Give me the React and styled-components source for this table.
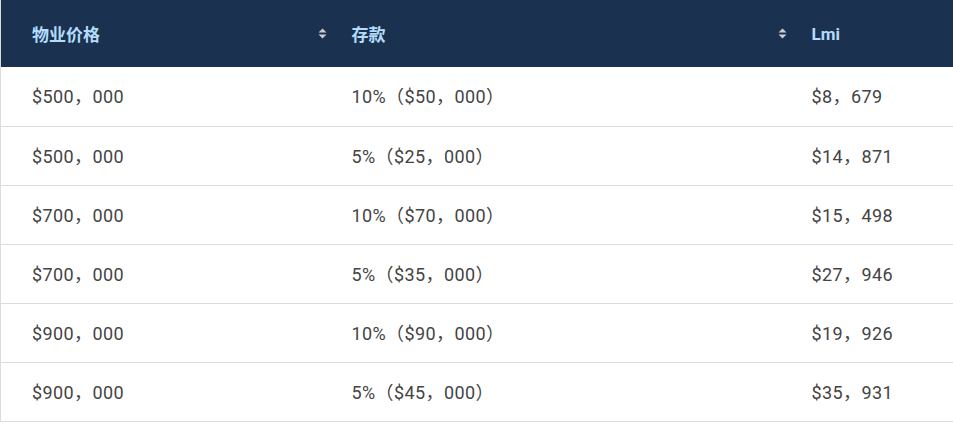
import React from "react";
import styled, { createGlobalStyle } from "styled-components";

const GlobalStyle = createGlobalStyle`
  body {
    margin: 0;
    background: #fff;
    font-family: Roboto, "Noto Sans CJK SC", sans-serif;
  }
`;

const Table = styled.table`
  border-collapse: collapse;
  width: 960px;
  table-layout: fixed;
  border-left: 1px solid #dcdcdc;
`;

const HeadCell = styled.th`
  background: #1b3150;
  color: #b3dcfb;
  font-weight: 700;
  font-size: 17px;
  text-align: left;
  height: 67px;
  padding: 0 12px;
  padding-left: ${(p) => (p.$first ? "31px" : "12px")};
  box-sizing: border-box;
  vertical-align: middle;
`;

const HeadInner = styled.div`
  display: flex;
  align-items: center;
  justify-content: space-between;
  margin-top: -1px;
`;

const Cell = styled.td`
  height: 59px;
  padding: 0 12px 2px;
  padding-left: ${(p) => (p.$first ? "31px" : "12px")};
  box-sizing: border-box;
  font-size: 18px;
  letter-spacing: 0.4px;
  color: #444;
  border-bottom: 1px solid #dcdcdc;
  vertical-align: middle;
`;

const SortIcon = () => (
  <svg width="9" height="11" viewBox="0 0 9 11" style={{ marginRight: "1px" }}>
    <path d="M4.5 0.5 L8.5 4.5 L0.5 4.5 Z" fill="#c9ccd2" />
    <path d="M0.5 6.5 L8.5 6.5 L4.5 10.5 Z" fill="#c9ccd2" />
  </svg>
);

const rows = [
  ["$500，000", "10%（$50，000）", "$8，679"],
  ["$500，000", "5%（$25，000）", "$14，871"],
  ["$700，000", "10%（$70，000）", "$15，498"],
  ["$700，000", "5%（$35，000）", "$27，946"],
  ["$900，000", "10%（$90，000）", "$19，926"],
  ["$900，000", "5%（$45，000）", "$35，931"],
];

export default function App() {
  return (
    <>
      <GlobalStyle />
      <Table>
        <colgroup>
          <col style={{ width: "339px" }} />
          <col style={{ width: "460px" }} />
          <col />
        </colgroup>
        <thead>
          <tr>
            <HeadCell $first>
              <HeadInner>
                物业价格
                <SortIcon />
              </HeadInner>
            </HeadCell>
            <HeadCell>
              <HeadInner>
                存款
                <SortIcon />
              </HeadInner>
            </HeadCell>
            <HeadCell>Lmi</HeadCell>
          </tr>
        </thead>
        <tbody>
          {rows.map((r, i) => (
            <tr key={i}>
              <Cell $first>{r[0]}</Cell>
              <Cell>{r[1]}</Cell>
              <Cell>{r[2]}</Cell>
            </tr>
          ))}
        </tbody>
      </Table>
    </>
  );
}
